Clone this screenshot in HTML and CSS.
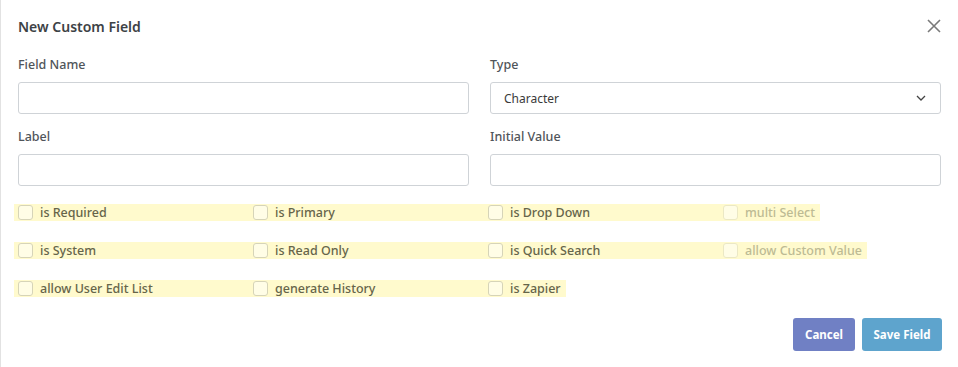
FILE: index.html
```html
<!DOCTYPE html>
<html lang="en">
<head>
    <meta charset="UTF-8">
    <title>New Custom Field</title>
    <link rel="stylesheet" href="styles.css">
</head>
<body>
    <div class="modal">
        <div class="modal-header">
            <h2>New Custom Field</h2>
            <button class="close" aria-label="Close">
                <svg width="14" height="14" viewBox="0 0 14 14">
                    <path d="M1 1L13 13M13 1L1 13" stroke="#7a7a7a" stroke-width="1.6" fill="none"/>
                </svg>
            </button>
        </div>

        <div class="form-grid">
            <div class="field">
                <label>Field Name</label>
                <input type="text">
            </div>
            <div class="field">
                <label>Type</label>
                <div class="select">
                    <span>Character</span>
                    <svg width="10" height="6" viewBox="0 0 10 6">
                        <path d="M1 1L5 5L9 1" stroke="#444" stroke-width="1.3" fill="none"/>
                    </svg>
                </div>
            </div>
            <div class="field">
                <label>Label</label>
                <input type="text">
            </div>
            <div class="field">
                <label>Initial Value</label>
                <input type="text">
            </div>
        </div>

        <div class="checks">
            <div class="check-row">
                <label class="check"><span class="box"></span>is Required</label>
                <label class="check"><span class="box"></span>is Primary</label>
                <label class="check"><span class="box"></span>is Drop Down</label>
                <label class="check disabled"><span class="box"></span>multi Select</label>
            </div>
            <div class="check-row">
                <label class="check"><span class="box"></span>is System</label>
                <label class="check"><span class="box"></span>is Read Only</label>
                <label class="check"><span class="box"></span>is Quick Search</label>
                <label class="check disabled"><span class="box"></span>allow Custom Value</label>
            </div>
            <div class="check-row">
                <label class="check"><span class="box"></span>allow User Edit List</label>
                <label class="check"><span class="box"></span>generate History</label>
                <label class="check"><span class="box"></span>is Zapier</label>
            </div>
        </div>

        <div class="modal-footer">
            <button class="btn btn-cancel">Cancel</button>
            <button class="btn btn-save">Save Field</button>
        </div>
    </div>
</body>
</html>
```

FILE: styles.css
```css
* {
    margin: 0;
    padding: 0;
    box-sizing: border-box;
    font-family: 'Noto Sans', 'Open Sans', sans-serif;
}

body {
    background: #fff;
    width: 958px;
    height: 367px;
    overflow: hidden;
}

.modal {
    height: 367px;
    border-left: 1px solid #e2e2e2;
    padding: 0 16px 0 17px;
}

.modal-header {
    display: flex;
    justify-content: space-between;
    align-items: center;
    height: 56px;
    padding-bottom: 4px;
}

.modal-header h2 {
    font-size: 14px;
    font-weight: 600;
    color: #3d4246;
}

.close {
    background: none;
    border: none;
    width: 14px;
    height: 14px;
    margin-right: 1px;
    display: flex;
}

.form-grid {
    display: grid;
    grid-template-columns: 451px 451px;
    column-gap: 21px;
    row-gap: 14px;
}

.field label {
    display: block;
    font-size: 12.5px;
    font-weight: 500;
    color: #50555a;
    line-height: 18px;
    height: 18px;
    margin-bottom: 8px;
}

.field input,
.select {
    width: 100%;
    height: 32px;
    border: 1px solid #cfd3d7;
    border-radius: 3px;
    background: #fff;
    outline: none;
}

.select {
    display: flex;
    align-items: center;
    justify-content: space-between;
    padding: 0 14px 0 13px;
    font-size: 12px;
    color: #3a3a3a;
}

.checks {
    margin-top: 18px;
    display: flex;
    flex-direction: column;
    align-items: flex-start;
    gap: 21px;
}

.check-row {
    display: flex;
    background: #fffacd;
    margin-left: -4px;
}

.check {
    display: flex;
    align-items: center;
    width: 235px;
    height: 17px;
    padding-left: 4px;
    font-size: 12.5px;
    font-weight: 500;
    color: #66654a;
}

.check:last-child {
    width: auto;
    padding-right: 5px;
}

.box {
    width: 15px;
    height: 15px;
    border: 1px solid #d6d4b8;
    border-radius: 3px;
    background: #fffde6;
    margin-right: 7px;
}

.check.disabled {
    color: #bdbb94;
}

.check.disabled .box {
    border-color: #ebe8c4;
}

.modal-footer {
    display: flex;
    justify-content: flex-end;
    gap: 7px;
    margin-top: 21px;
}

.btn {
    height: 33px;
    border: none;
    border-radius: 3px;
    color: #fff;
    font-size: 11.5px;
    font-weight: 700;
}

.btn-cancel {
    width: 62px;
    background: #7080c4;
}

.btn-save {
    width: 80px;
    background: #5ea4cd;
}
```
